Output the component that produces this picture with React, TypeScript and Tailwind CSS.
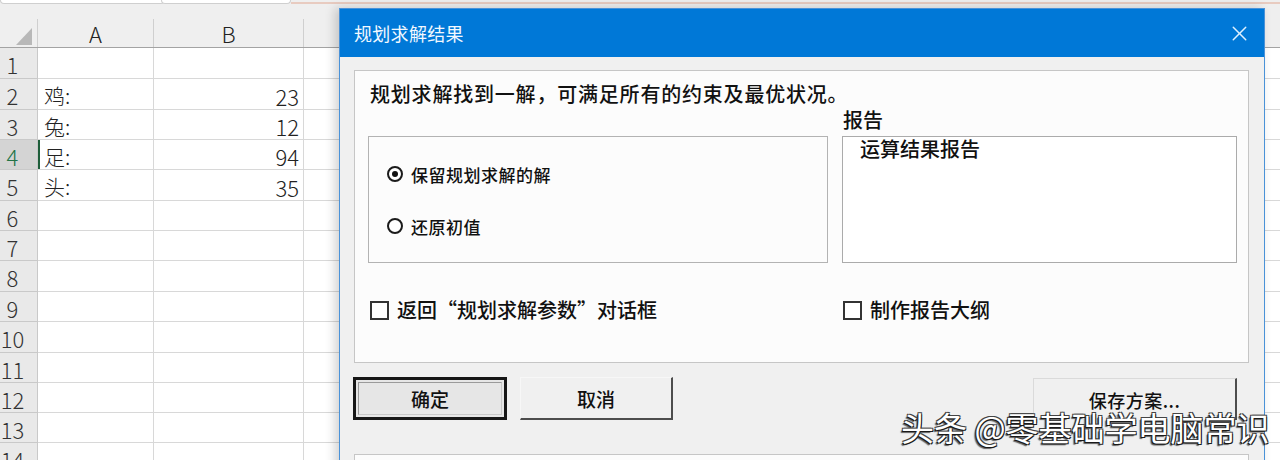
import { X } from "lucide-react";

const rowHeights = [31, 31, 30, 30, 31, 30, 30, 31, 30, 31, 30, 30, 30, 31];

const cells: Record<number, [string, string]> = {
  2: ["鸡:", "23"],
  3: ["兔:", "12"],
  4: ["足:", "94"],
  5: ["头:", "35"],
};

const extraCols = [0, 1, 2, 3, 4, 5, 6];

function Sheet() {
  return (
    <div className="font-['Noto_Sans_CJK_SC','Noto_Sans',sans-serif] text-[#222]">
      {/* formula bar remnants */}
      <div className="flex h-[6px] items-start bg-[#efefef]">
        <div className="h-[4px] w-[165px] rounded-b-sm border-x border-b border-[#cfcfcf] bg-white" />
        <div className="ml-[-4px] h-[4px] w-[130px] rounded-b-sm border-x border-b border-[#cfcfcf] bg-white" />
        <div className="mt-[2px] h-[2px] flex-1 bg-[#e8cbc0]" />
      </div>
      {/* column headers */}
      <div className="grid h-[42px] grid-cols-[38px_116px_150px_150px_150px_150px_150px_150px_150px_150px] items-end border-b border-[#a3a3a3] bg-[#efefef]">
        <div className="relative h-[28px] border-r border-[#cfcfcf]">
          <div className="absolute bottom-[2px] right-[5px] h-[17px] w-[16px] bg-[#b8b8b8] [clip-path:polygon(100%_0,100%_100%,0_100%)]" />
        </div>
        <div className="flex h-[28px] items-center justify-center border-r border-[#cfcfcf] text-[22px] font-light leading-none">A</div>
        <div className="flex h-[28px] items-center justify-center border-r border-[#cfcfcf] text-[22px] font-light leading-none">B</div>
        {extraCols.map((c) => (
          <div key={c} className="h-[28px] border-r border-[#cfcfcf]" />
        ))}
      </div>
      {rowHeights.map((h, i) => {
        const n = i + 1;
        const sel = n === 4;
        const data = cells[n];
        return (
          <div
            key={n}
            className={`grid grid-cols-[38px_116px_150px_150px_150px_150px_150px_150px_150px_150px] ${h === 31 ? "h-[31px]" : "h-[30px]"}`}
          >
            <div
              className={`flex items-center justify-center border-b border-r border-[#c9c9c9] pr-[12px] pt-[2px] text-[22px] font-light leading-none ${sel ? "bg-[#d4d4d4] text-[#217346]" : "bg-[#e9e9e9] text-[#333]"}`}
            >
              {n}
            </div>
            <div
              className={`flex items-center border-b border-r border-[#d8d8d8] pl-[6px] pt-[3px] text-[21px] font-light leading-none ${sel ? "shadow-[inset_2px_0_0_#1e5e3a]" : ""}`}
            >
              {data ? data[0] : ""}
            </div>
            <div className="flex items-center justify-end border-b border-r border-[#d8d8d8] pr-[4px] pt-[3px] text-[22px] font-light leading-none">
              {data ? data[1] : ""}
            </div>
            {extraCols.map((c) => (
              <div key={c} className="border-b border-r border-[#d8d8d8]" />
            ))}
          </div>
        );
      })}
    </div>
  );
}

function Radio({ checked, label }: { checked?: boolean; label: string }) {
  return (
    <div className="flex h-[24px] items-center gap-[8px]">
      <span className="flex h-[16px] w-[16px] items-center justify-center rounded-full border-2 border-[#1b1b1b] bg-white">
        {checked && <span className="h-[6px] w-[6px] rounded-full bg-[#111]" />}
      </span>
      <span className="text-[17px] leading-none tracking-[0.5px]">{label}</span>
    </div>
  );
}

function Checkbox({ label }: { label: string }) {
  return (
    <div className="flex h-[24px] items-center gap-[8px]">
      <span className="h-[19px] w-[19px] border-2 border-[#333] bg-white" />
      <span className="text-[20px] leading-none">{label}</span>
    </div>
  );
}

function SolverDialog() {
  return (
    <div className="absolute left-[339px] top-[8px] h-[470px] w-[926px] border border-[#4a92d8] bg-[#f0f0f0] font-['Noto_Sans_CJK_SC','Noto_Sans',sans-serif] text-[#111] shadow-[-4px_0_10px_rgba(0,0,0,0.18)]">
      <div className="flex h-[48px] items-center justify-between bg-[#0078d7] pl-[14px] pr-[12px]">
        <span className="text-[18px] leading-none tracking-[0.3px] text-[#f2f8ff]">规划求解结果</span>
        <X className="h-[25px] w-[25px] text-[#dff1ff]" strokeWidth={1.4} />
      </div>
      <div className="pl-[14px] pr-[15px] pt-[13px]">
        <div className="h-[293px] border border-[#c6c6c6] bg-[#fcfcfc] px-[13px] pt-[10px] font-medium">
          <p className="pl-[2px] text-[20px] leading-[26px] tracking-[0.8px]">
            规划求解找到一解，可满足所有的约束及最优状况。
          </p>
          <div className="grid grid-cols-[460px_395px] gap-x-[14px]">
            <div />
            <div className="h-[29px] pl-[1px] text-[20px] leading-[26px]">报告</div>
            <div className="flex h-[127px] flex-col gap-[28px] border border-[#b3b3b3] pl-[18px] pt-[25px]">
              <Radio checked label="保留规划求解的解" />
              <Radio label="还原初值" />
            </div>
            <div className="h-[127px] border border-[#ababab] bg-white pl-[17px] text-[20px] leading-[24px]">
              运算结果报告
            </div>
            <div className="mt-[35px] pl-[2px]">
              <Checkbox label="返回“规划求解参数”对话框" />
            </div>
            <div className="mt-[35px] pl-[1px]">
              <Checkbox label="制作报告大纲" />
            </div>
          </div>
        </div>
        <div className="mt-[14px] flex font-medium">
          <button className="ml-[-1px] h-[43px] w-[154px] border-[3px] border-[#161616] bg-[#e6e6e6] p-[2px]">
            <span className="flex h-full w-full items-center justify-center border border-[#9a9a9a] border-b-[#c8c8c8] border-r-[#c8c8c8] text-[19px] leading-none">
              确定
            </span>
          </button>
          <button className="ml-[13px] flex h-[43px] w-[153px] items-center justify-center border-b-2 border-l border-r-2 border-t border-b-[#4d4d4d] border-l-[#f7f7f7] border-r-[#4d4d4d] border-t-[#f7f7f7] bg-[#f0f0f0] text-[19px] leading-none">
            取消
          </button>
          <button className="ml-auto mr-[12px] mt-[1px] flex h-[42px] w-[204px] items-center justify-center border-l border-r-2 border-t border-l-[#dadada] border-r-[#4d4d4d] border-t-[#dadada] bg-[#f0f0f0] pt-[1px] text-[18px] leading-none tracking-[0.5px]">
            保存方案...
          </button>
        </div>
        <div className="mt-[34px] h-[40px] border border-[#c6c6c6] bg-[#fcfcfc]" />
      </div>
    </div>
  );
}

export default function App() {
  return (
    <div className="relative h-[460px] w-[1280px] overflow-hidden bg-white">
      <Sheet />
      <SolverDialog />
      <div className="absolute left-[901px] top-[407px] whitespace-nowrap font-['Noto_Sans_CJK_SC',sans-serif] text-[33px] leading-[40px] text-white [text-shadow:-1px_1px_0_#1a1a1a,1px_1px_0_#1a1a1a,-1px_-1px_0_#444,1px_-1px_0_#444,-2px_2px_1px_rgba(0,0,0,0.6)]">
        头条 @零基础学电脑常识
      </div>
    </div>
  );
}
